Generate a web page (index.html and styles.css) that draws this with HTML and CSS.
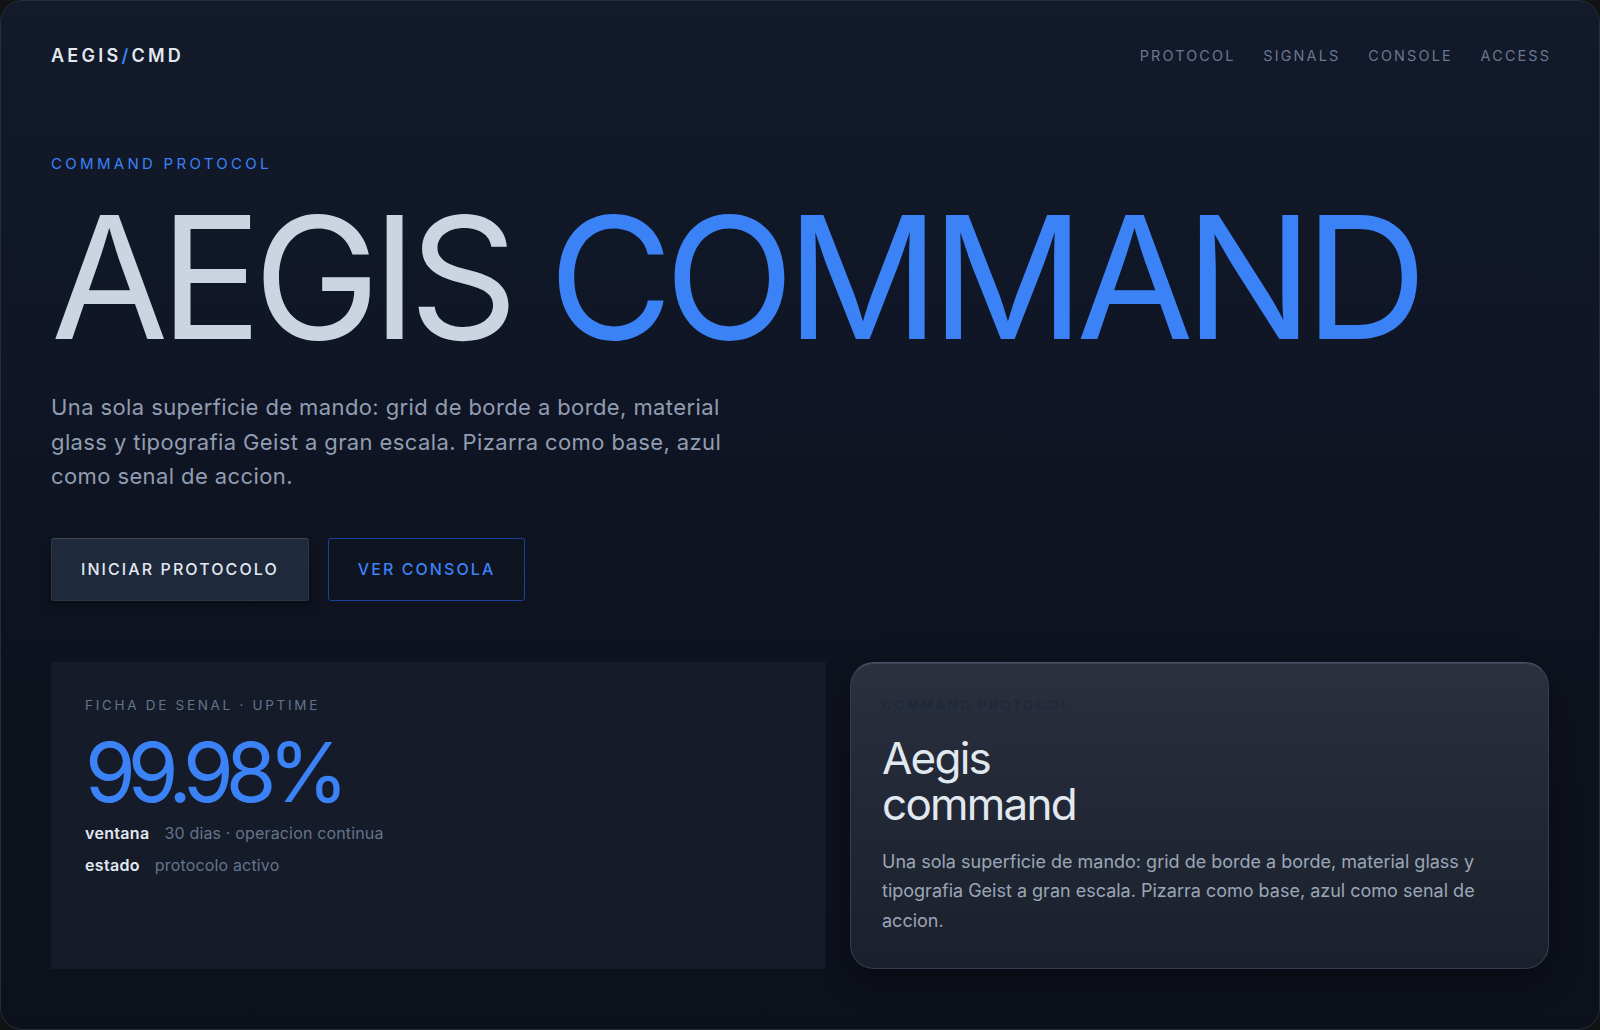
FILE: index.html
```html
<!DOCTYPE html>
<html lang="es">
<head>
<meta charset="utf-8">
<title>Aegis Command</title>
<link rel="stylesheet" href="styles.css">
</head>
<body>
<div class="frame">
  <header class="topbar">
    <div class="logo">AEGIS<span class="slash">/</span>CMD</div>
    <nav class="nav">
      <a href="#">PROTOCOL</a>
      <a href="#">SIGNALS</a>
      <a href="#">CONSOLE</a>
      <a href="#">ACCESS</a>
    </nav>
  </header>

  <section class="hero">
    <p class="eyebrow">COMMAND PROTOCOL</p>
    <h1 class="headline">AEGIS <span class="accent">COMMAND</span></h1>
    <p class="lead">Una sola superficie de mando: grid de borde a borde, material glass y tipografia Geist a gran escala. Pizarra como base, azul como senal de accion.</p>
    <div class="actions">
      <a class="btn btn-primary" href="#">INICIAR PROTOCOLO</a>
      <a class="btn btn-ghost" href="#">VER CONSOLA</a>
    </div>
  </section>

  <section class="cards">
    <article class="card-signal">
      <p class="card-label">FICHA DE SENAL · UPTIME</p>
      <p class="metric">99.98%</p>
      <ul class="facts">
        <li><span class="key">ventana</span><span class="val">30 dias · operacion continua</span></li>
        <li><span class="key">estado</span><span class="val">protocolo activo</span></li>
      </ul>
    </article>
    <article class="card-glass">
      <p class="glass-label">COMMAND PROTOCOL</p>
      <h2 class="glass-title">Aegis command</h2>
      <p class="glass-text">Una sola superficie de mando: grid de borde a borde, material glass y tipografia Geist a gran escala. Pizarra como base, azul como senal de accion.</p>
    </article>
  </section>
</div>
</body>
</html>
```

FILE: styles.css
```css
* { box-sizing: border-box; }

html, body {
  margin: 0;
  padding: 0;
  height: 100%;
}

body {
  background: #111214;
  font-family: Inter, "Noto Sans", "DejaVu Sans", sans-serif;
  color: #cbd5e1;
}

.frame {
  height: 1030px;
  border: 1px solid #272c37;
  border-radius: 22px;
  overflow: hidden;
  padding: 0 50px;
  background: linear-gradient(180deg, #121a2b 0%, #0f1524 40%, #0e121d 70%, #0d111b 100%);
}

a { text-decoration: none; }

.topbar {
  height: 109px;
  display: flex;
  align-items: center;
  justify-content: space-between;
}

.logo {
  font-size: 18px;
  font-weight: 600;
  letter-spacing: 0.18em;
  color: #e2e8f0;
}

.slash { color: #3b82f6; }

.nav {
  display: flex;
  gap: 30px;
}

.nav a {
  font-size: 14.4px;
  letter-spacing: 0.15em;
  color: #6b7890;
  margin-right: -0.15em;
}

.hero { display: flex; flex-direction: column; align-items: flex-start; }

.eyebrow {
  margin: 44px 0 0;
  font-size: 15px;
  line-height: 20px;
  letter-spacing: 0.22em;
  color: #3b82f6;
}

.headline {
  margin: 18px 0 0;
  font-size: 170px;
  line-height: 1;
  font-weight: 400;
  letter-spacing: -0.05em;
  color: #cbd5e1;
  white-space: nowrap;
}

.accent { color: #3b82f6; }

.lead {
  margin: 28px 0 0;
  max-width: 700px;
  font-size: 22px;
  line-height: 34.6px;
  letter-spacing: 0.018em;
  color: #919db2;
}

.actions {
  margin-top: 44px;
  display: flex;
  gap: 19px;
}

.btn {
  display: inline-flex;
  align-items: center;
  height: 63px;
  padding: 0 29px;
  font-size: 16px;
  font-weight: 500;
  letter-spacing: 0.13em;
  border-radius: 3px;
}

.btn-primary {
  background: #1e293b;
  color: #e2e8f0;
  border: 1px solid #2b3648;
  border-top-color: #3a4557;
  box-shadow: 0 2px 0 #0a0d14, 0 4px 10px rgba(0, 0, 0, 0.35);
}

.btn-ghost {
  background: transparent;
  color: #3b82f6;
  border: 1px solid #1d3f9e;
}

.cards {
  margin-top: 61px;
  display: grid;
  grid-template-columns: 775px 1fr;
  gap: 24px;
}

.card-signal {
  background: #151b29;
  padding: 34px 34px;
  box-shadow: 0 1px 0 #0c1019;
}

.card-label {
  margin: 0;
  font-size: 13.5px;
  line-height: 18px;
  letter-spacing: 0.2em;
  color: #64748b;
}

.metric {
  margin: 18px 0 0;
  font-size: 82px;
  line-height: 1;
  font-weight: 400;
  letter-spacing: -0.1em;
  color: #3b82f6;
}

.facts {
  list-style: none;
  margin: 7px 0 0;
  padding: 0;
  display: flex;
  flex-direction: column;
  gap: 8px;
}

.facts li {
  display: flex;
  gap: 15px;
  font-size: 16px;
  line-height: 24px;
}

.key { color: #e2e8f0; font-weight: 600; letter-spacing: 0.02em; }
.val { color: #64748b; letter-spacing: 0.01em; }

.card-glass {
  border-radius: 24px;
  border: 1px solid #343d4d;
  border-top-color: #4a5263;
  background: linear-gradient(180deg, #2a303d 0%, #222835 45%, #1b202c 100%);
  box-shadow: 0 10px 30px rgba(0, 0, 0, 0.35), inset 0 1px 0 rgba(148, 163, 184, 0.18);
  padding: 33px 31px 32px;
}

.glass-label {
  margin: 0;
  font-size: 13px;
  line-height: 18px;
  font-weight: 600;
  letter-spacing: 0.2em;
  color: #1f293a;
}

.glass-title {
  margin: 21px 0 0;
  max-width: 220px;
  font-size: 44px;
  line-height: 46px;
  font-weight: 400;
  letter-spacing: -0.04em;
  color: #e2e8f0;
}

.glass-text {
  margin: 20px 0 0;
  font-size: 18px;
  line-height: 29.6px;
  color: #9aa6b8;
}
```
